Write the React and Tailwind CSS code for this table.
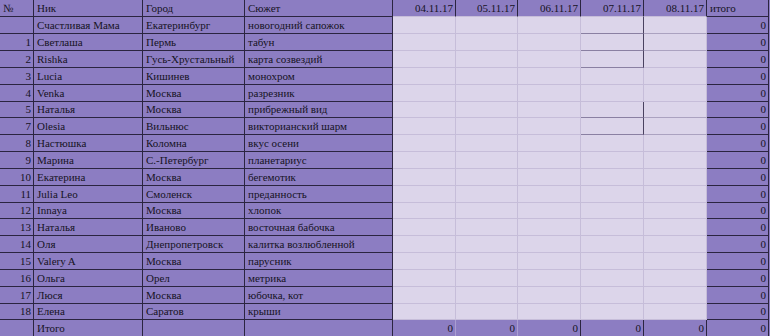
import React from "react";

// ширины колонок (вместе с правой границей)
const widths = [
  "w-[34px]",
  "w-[109px]",
  "w-[102px]",
  "w-[148px]",
  "w-[63px]",
  "w-[62px]",
  "w-[63px]",
  "w-[63px]",
  "w-[63px]",
  "w-[62px]",
];

const dates = ["04.11.17", "05.11.17", "06.11.17", "07.11.17", "08.11.17"];

const rows = [
  ["", "Счастливая Мама", "Екатеринбург", "новогодний сапожок"],
  ["1", "Светлаша", "Пермь", "табун"],
  ["2", "Rishka", "Гусь-Хрустальный", "карта созвездий"],
  ["3", "Lucia", "Кишинев", "монохром"],
  ["4", "Venka", "Москва", "разрезник"],
  ["5", "Наталья", "Москва", "прибрежный вид"],
  ["7", "Olesia", "Вильнюс", "викторианский шарм"],
  ["8", "Настюшка", "Коломна", "вкус осени"],
  ["9", "Марина", "С.-Петербург", "планетариус"],
  ["10", "Екатерина", "Москва", "бегемотик"],
  ["11", "Julia Leo", "Смоленск", "преданность"],
  ["12", "Innaya", "Москва", "хлопок"],
  ["13", "Наталья", "Иваново", "восточная бабочка"],
  ["14", "Оля", "Днепропетровск", "калитка возлюбленной"],
  ["15", "Valery A", "Москва", "парусник"],
  ["16", "Ольга", "Орел", "метрика"],
  ["17", "Люся", "Москва", "юбочка, кот"],
  ["18", "Елена", "Саратов", "крыши"],
];

// несколько строк на пиксель ниже, как в оригинале
const shortRows = [5, 11, 17];
// строки, где у 07.11.17 остались тёмные рамки
const markedRows = [0, 1, 2, 5, 6];

function Cell({ w, short, className = "", right, children }) {
  return (
    <div
      className={`${w} ${
        short ? "h-[16px] leading-[15px]" : "h-[17px] leading-[16px]"
      } shrink-0 border-r border-b px-[3px] whitespace-nowrap overflow-hidden ${
        right ? "text-right pr-[2px]" : "text-left"
      } ${className}`}
    >
      {children}
    </div>
  );
}

const dark = "bg-[#8c7dc2] border-[#2b2540]";

export default function App() {
  return (
    <div className="w-[770px] h-[336px] overflow-hidden bg-[#8c7dc2] text-[11px] text-[#16131f] font-['Liberation_Serif','Times_New_Roman',serif]">
      {/* шапка */}
      <div className="flex">
        <Cell w={widths[0]} className={dark}>№</Cell>
        <Cell w={widths[1]} className={dark}>Ник</Cell>
        <Cell w={widths[2]} className={dark}>Город</Cell>
        <Cell w={widths[3]} className={dark}>Сюжет</Cell>
        {dates.map((d, i) => (
          <Cell
            key={d}
            w={widths[4 + i]}
            right
            className="bg-[#8c7dc2] border-r-[#2b2540] border-b-[#c6bdd9]"
          >
            {d}
          </Cell>
        ))}
        <Cell w={widths[9]} className={dark}>итого</Cell>
      </div>

      {rows.map((r, ri) => {
        const short = shortRows.includes(ri);
        const marked = markedRows.includes(ri);
        return (
          <div key={ri} className="flex">
            <Cell w={widths[0]} short={short} right className={dark}>{r[0]}</Cell>
            <Cell w={widths[1]} short={short} className={dark}>{r[1]}</Cell>
            <Cell w={widths[2]} short={short} className={dark}>{r[2]}</Cell>
            <Cell w={widths[3]} short={short} className={dark}>{r[3]}</Cell>
            {dates.map((d, i) => {
              const darkRight = i === 3 && marked;
              const midBottom = i === 3 && marked;
              const softBottom = i === 4 && (ri <= 1 || ri === 5 || ri === 6);
              return (
                <Cell
                  key={d}
                  w={widths[4 + i]}
                  short={short}
                  className={`bg-[#dcd5ea] ${
                    darkRight ? "border-r-[#4a4260]" : "border-r-[#c6bdd9]"
                  } ${
                    midBottom
                      ? "border-b-[#8a80a2]"
                      : softBottom
                      ? "border-b-[#aba2c0]"
                      : "border-b-[#c6bdd9]"
                  }`}
                />
              );
            })}
            <Cell w={widths[9]} short={short} right className={dark}>0</Cell>
          </div>
        );
      })}

      {/* итоговая строка */}
      <div className="flex">
        <Cell w={widths[0]} className={dark}></Cell>
        <Cell w={widths[1]} className={dark}>Итого</Cell>
        <Cell w={widths[2]} className={dark}></Cell>
        <Cell w={widths[3]} className={dark}></Cell>
        {dates.map((d, i) => (
          <Cell
            key={d}
            w={widths[4 + i]}
            right
            className={`bg-[#8c7dc2] border-b-[#2b2540] ${
              i >= 2 ? "border-r-[#2b2540]" : "border-r-[#a99ed2]"
            }`}
          >
            0
          </Cell>
        ))}
        <Cell w={widths[9]} right className={dark}>0</Cell>
      </div>
    </div>
  );
}
